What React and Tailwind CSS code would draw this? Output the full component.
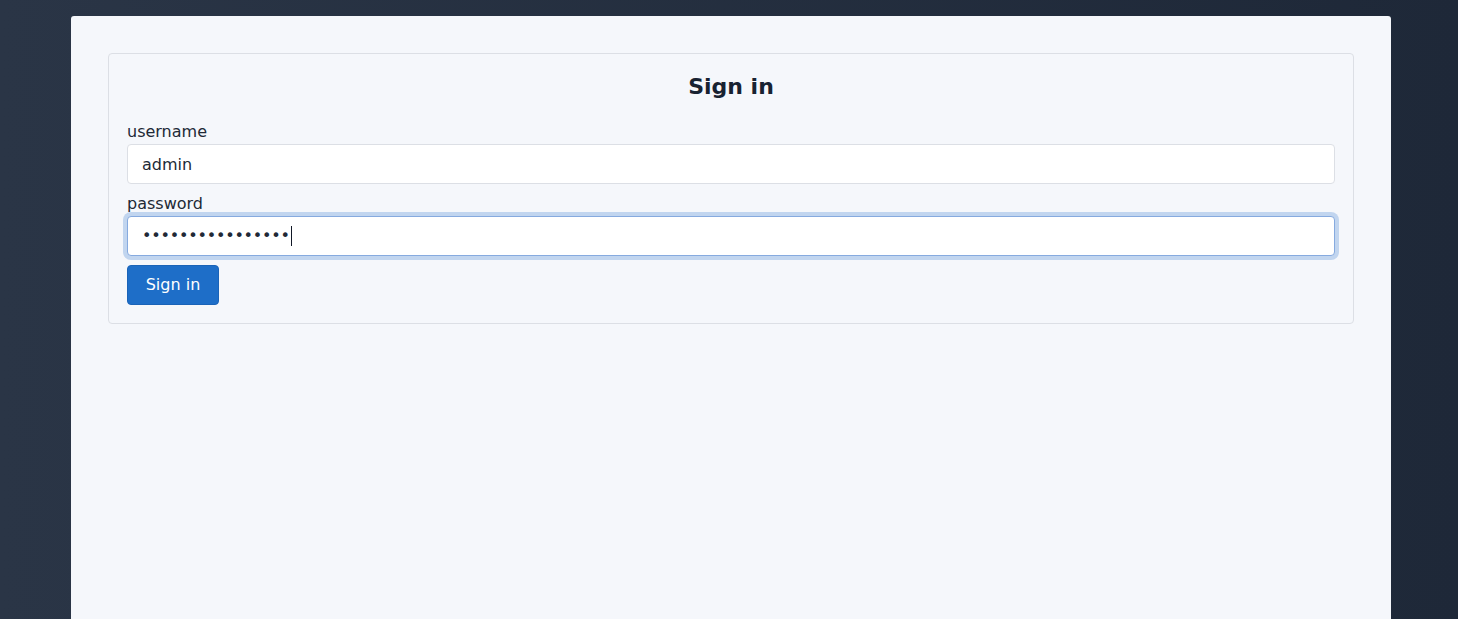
import React from 'react'

const FONT = { fontFamily: '"DejaVu Sans", "Noto Sans", sans-serif' }

export default function App() {
  return (
    <div
      className="min-h-[619px] h-[619px] overflow-hidden bg-gradient-to-r from-[#2a3546] to-[#1e2838] pl-[71px] pt-[16px]"
      style={FONT}
    >
      <div className="w-[1320px] h-full rounded-t-[3px] bg-[#f5f7fb] p-[37px]">
        <form className="rounded-[4px] border border-[#dcdfe5] px-[18px] pt-[18px] pb-[18px]">
          <h1 className="text-center text-[22px] leading-[30px] font-bold text-[#182231]">Sign in</h1>

          <label className="mt-[18px] block text-[16px] leading-[24px] text-[#212936]">username</label>
          <input
            readOnly
            value="admin"
            className="block h-[40px] w-full rounded-[4px] border border-[#dcdfe5] bg-white px-[14px] text-[16px] text-[#212936] outline-none"
          />

          <label className="mt-[8px] block text-[16px] leading-[24px] text-[#212936]">password</label>
          <div className="flex h-[40px] w-full items-center rounded-[4px] border border-[#86aadf] bg-white px-[14px] text-[16px] text-[#212936] shadow-[0_0_0_4px_#c1d5ef]">
            <span className="tracking-[-0.2px]">••••••••••••••••</span>
            <span className="ml-[1px] h-[20px] w-[1px] bg-[#111827]" />
          </div>

          <button
            type="button"
            className="mt-[9px] block h-[40px] w-[92px] rounded-[4px] border border-[#1a63b8] bg-[#1e6ec8] text-[16px] text-white"
          >
            Sign in
          </button>
        </form>
      </div>
    </div>
  )
}
